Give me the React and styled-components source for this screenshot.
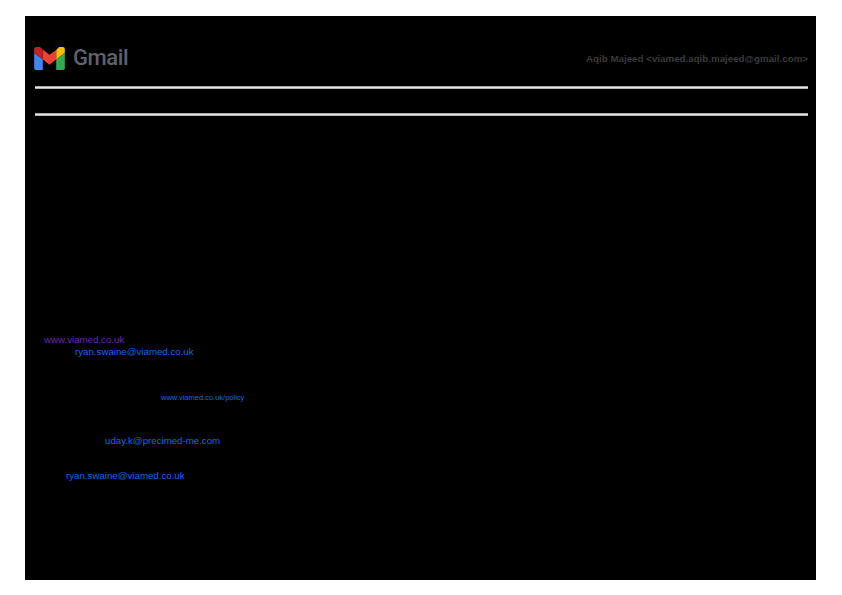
import React from 'react'
import styled, { createGlobalStyle } from 'styled-components'

const Global = createGlobalStyle`
html, body {
  margin: 0;
  padding: 0;
  background: #fff;
}
`;

const Sheet = styled.div`
width: 791px;
height: 564px;
margin: 16px 0 0 25px;
background: #000;
box-sizing: border-box;
padding: 26px 8px 0 9px;
font-family: "Liberation Sans", Arial, sans-serif;
overflow: hidden;
`;

const Header = styled.div`
display: flex;
align-items: center;
justify-content: space-between;
height: 32px;
`;

const Brand = styled.div`
display: flex;
align-items: center;
gap: 8px;
`;

const BrandName = styled.span`
font-family: "Roboto", sans-serif;
font-size: 22px;
font-weight: 500;
line-height: 31px;
color: #5f6368;
letter-spacing: -0.4px;
margin-top: -2px;
`;

const Account = styled.span`
font-size: 9.75px;
font-weight: 700;
color: #3a3a3a;
`;

const Rule = styled.div`
height: 3px;
margin: ${props => props.top}px 0 0 1px;
background: linear-gradient(#8a8a8a, #e4e4e4 50%, #9a9a9a);
`;

const Thread = styled.div`
margin-top: 216px;
display: flex;
flex-direction: column;
`;

const Line = styled.div`
height: ${props => props.height}px;
line-height: ${props => props.height}px;
padding-left: ${props => props.indent}px;
margin-top: ${props => props.gap || 0}px;
`;

const Link = styled.a`
font-size: ${props => props.small ? 7.5 : 9.7}px;
color: ${props => props.visited ? '#6a28b0' : '#1a66e6'};
text-decoration: none;
`;

const GmailMark = () => (
  <svg width="31" height="23" viewBox="0 0 32 24">
    <path d="M0 6L9 13V24H1.500C.7 24 0 23.300 0 22.500Z" fill="#4285f4" />
    <path d="M23 13L32 6V22.500C32 23.300 31.300 24 30.500 24H23Z" fill="#34a853" />
    <path d="M23 3L26 0H30C31 0 32 1 32 2V6L23 13Z" fill="#fbbc04" />
    <path d="M9 2.500L16 8L23 3V13L16 18.500L9 13Z" fill="#ea4335" />
    <path d="M0 2C0 1 1 0 2 0H6L9 2.500V13L0 6Z" fill="#c5221f" />
  </svg>
);

const App = () => {
  return (
    <>
      <Global />
      <Sheet>
        <Header>
          <Brand>
            <GmailMark />
            <BrandName>Gmail</BrandName>
          </Brand>
          <Account>Aqib Majeed &lt;viamed.aqib.majeed@gmail.com&gt;</Account>
        </Header>
        <Rule top={12} />
        <Rule top={24} />
        <Thread>
          <Line height={12} indent={10}><Link visited>www.viamed.co.uk</Link></Line>
          <Line height={12} indent={41}><Link>ryan.swaine@viamed.co.uk</Link></Line>
          <Line height={10} indent={127} gap={34}><Link small>www.viamed.co.uk/policy</Link></Line>
          <Line height={12} indent={71} gap={33}><Link>uday.k@precimed-me.com</Link></Line>
          <Line height={12} indent={32} gap={23}><Link>ryan.swaine@viamed.co.uk</Link></Line>
        </Thread>
      </Sheet>
    </>
  )
}

export default App
